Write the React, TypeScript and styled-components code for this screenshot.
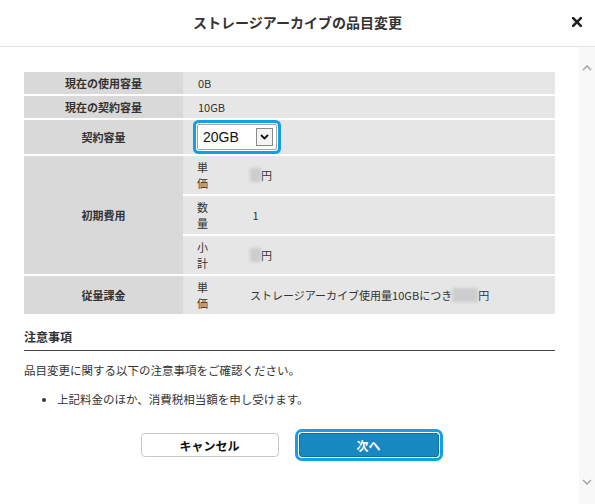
import styled, { createGlobalStyle } from "styled-components";

const GlobalStyle = createGlobalStyle`
html, body {
    margin: 0;
    padding: 0;
    background: #fff;
}
body {
    font-family: "Noto Sans CJK JP", "Noto Sans", sans-serif;
    color: #333;
}
`;

export default function App() {
    return (
        <Dialog>
            <GlobalStyle />
            <Header>
                <span />
                <Title>ストレージアーカイブの品目変更</Title>
                <CloseButton aria-label="close">
                    <svg width="10" height="10" viewBox="0 0 10 10">
                        <path d="M1.2 1.2 L8.8 8.8 M8.8 1.2 L1.2 8.8" stroke="#222" strokeWidth="2.6" strokeLinecap="square" />
                    </svg>
                </CloseButton>
            </Header>
            <Body>
                <Content>
                    <InfoGrid>
                        <Label>現在の使用容量</Label>
                        <Value>0B</Value>
                        <Label>現在の契約容量</Label>
                        <Value>10GB</Value>
                        <Label>契約容量</Label>
                        <Value $tight>
                            <SelectBox>
                                <span>20GB</span>
                                <ArrowBox>
                                    <svg width="9" height="6" viewBox="0 0 9 6">
                                        <path d="M1 1 L4.5 4.5 L8 1" stroke="#111" strokeWidth="1.8" fill="none" />
                                    </svg>
                                </ArrowBox>
                            </SelectBox>
                        </Value>
                        <Label $span={3}>初期費用</Label>
                        <SubRow>
                            <SubLabel>単価</SubLabel>
                            <SubValue><Blur $w={11} />円</SubValue>
                        </SubRow>
                        <SubRow>
                            <SubLabel>数量</SubLabel>
                            <SubValue>&nbsp;1</SubValue>
                        </SubRow>
                        <SubRow>
                            <SubLabel>小計</SubLabel>
                            <SubValue><Blur $w={11} />円</SubValue>
                        </SubRow>
                        <Label>従量課金</Label>
                        <SubRow>
                            <SubLabel>単価</SubLabel>
                            <SubValue>ストレージアーカイブ使用量10GBにつき<Blur $w={26} />円</SubValue>
                        </SubRow>
                    </InfoGrid>

                    <NoticeTitle>注意事項</NoticeTitle>
                    <NoticeText>品目変更に関する以下の注意事項をご確認ください。</NoticeText>
                    <NoticeList>
                        <li>上記料金のほか、消費税相当額を申し受けます。</li>
                    </NoticeList>

                    <Buttons>
                        <CancelButton>キャンセル</CancelButton>
                        <NextButton>次へ</NextButton>
                    </Buttons>
                </Content>
                <ScrollBar>
                    <svg width="10" height="6" viewBox="0 0 10 6">
                        <path d="M1 5 L5 1 L9 5" stroke="#a8a8a8" strokeWidth="1.6" fill="none" />
                    </svg>
                    <svg width="10" height="6" viewBox="0 0 10 6">
                        <path d="M1 1 L5 5 L9 1" stroke="#a8a8a8" strokeWidth="1.6" fill="none" />
                    </svg>
                </ScrollBar>
            </Body>
        </Dialog>
    );
};

const Dialog = styled.div`
width: 595px;
height: 504px;
display: flex;
flex-direction: column;
background: #fff;
overflow: hidden;
`;

const Header = styled.header`
height: 47px;
flex: none;
display: grid;
grid-template-columns: 1fr auto 1fr;
align-items: center;
border-bottom: 1px solid #e2e2e2;
padding-bottom: 2px;
box-sizing: border-box;
`;

const Title = styled.h1`
margin: 0;
font-size: 14px;
font-weight: bold;
color: #333;
line-height: 20px;
`;

const CloseButton = styled.button`
justify-self: end;
margin-right: 13px;
padding: 0;
border: none;
background: none;
display: flex;
align-items: center;
`;

const Body = styled.div`
flex: 1;
display: flex;
min-height: 0;
`;

const Content = styled.div`
flex: 1;
padding: 25px 24px 0 24px;
`;

const ScrollBar = styled.div`
width: 16px;
flex: none;
background: #f8f8f8;
display: flex;
flex-direction: column;
align-items: center;
justify-content: space-between;
padding: 18px 0 19px;
box-sizing: border-box;
`;

const InfoGrid = styled.div`
display: grid;
grid-template-columns: 159px 1fr;
row-gap: 2px;
background: #fff;
font-size: 11px;
line-height: 16px;
`;

const Label = styled.div<{ $span?: number }>`
grid-column: 1;
grid-row: ${(p) => (p.$span ? `span ${p.$span}` : "auto")};
background: #d9d9d9;
font-weight: bold;
color: #333;
display: flex;
align-items: center;
justify-content: center;
padding: 3px 0;
`;

const Value = styled.div<{ $tight?: boolean }>`
grid-column: 2;
background: #e6e6e6;
display: flex;
align-items: center;
padding: ${(p) => (p.$tight ? "4px 14px" : "3px 15px")};
`;

const SubRow = styled.div`
grid-column: 2;
background: #e6e6e6;
display: flex;
align-items: center;
padding: 3px 0;
`;

const SubLabel = styled.div`
width: 67px;
flex: none;
padding: 0 42px 0 14px;
box-sizing: border-box;
`;

const SubValue = styled.div`
display: flex;
align-items: center;
`;

const Blur = styled.span<{ $w: number }>`
display: inline-block;
width: ${(p) => p.$w}px;
height: 14px;
background: #cdcdcd;
filter: blur(1.5px);
`;

const SelectBox = styled.div`
width: 80px;
height: 26px;
box-sizing: border-box;
border: 1px solid #a6a6a6;
background: #fff;
border-radius: 1px;
display: flex;
align-items: center;
justify-content: space-between;
padding: 0 3px 0 5px;
font-family: "Liberation Sans", Arial, sans-serif;
font-size: 14px;
color: #111;
box-shadow: 0 0 0 1px #fff, 0 0 0 4px #139fe3;
border-radius: 2px;
`;

const ArrowBox = styled.span`
width: 17px;
height: 18px;
box-sizing: border-box;
border: 1px solid #8a8a8a;
background: #f4f4f4;
display: flex;
align-items: center;
justify-content: center;
`;

const NoticeTitle = styled.h2`
margin: 15px 0 0;
font-size: 12px;
font-weight: bold;
line-height: 16px;
color: #333;
padding-bottom: 5px;
border-bottom: 1px solid #444;
`;

const NoticeText = styled.p`
margin: 11px 0 0;
font-size: 11.5px;
line-height: 16px;
color: #333;
`;

const NoticeList = styled.ul`
margin: 13px 0 0;
padding-left: 33px;
font-size: 11.5px;
line-height: 16px;
color: #333;
`;

const Buttons = styled.div`
display: flex;
justify-content: center;
gap: 20px;
margin-top: 26px;
`;

const CancelButton = styled.button`
width: 138px;
height: 24px;
border: 1px solid #c8c8c8;
border-radius: 4px;
background: #fff;
font-family: inherit;
font-size: 12px;
font-weight: bold;
color: #111;
padding: 0;
`;

const NextButton = styled.button`
width: 140px;
height: 24px;
border: 1px solid #0f6f9f;
border-radius: 3px;
background: #1888c0;
font-family: inherit;
font-size: 12px;
font-weight: bold;
color: #fff;
padding: 0;
box-shadow: 0 0 0 1px #fff, 0 0 0 4px #149fe4;
`;
